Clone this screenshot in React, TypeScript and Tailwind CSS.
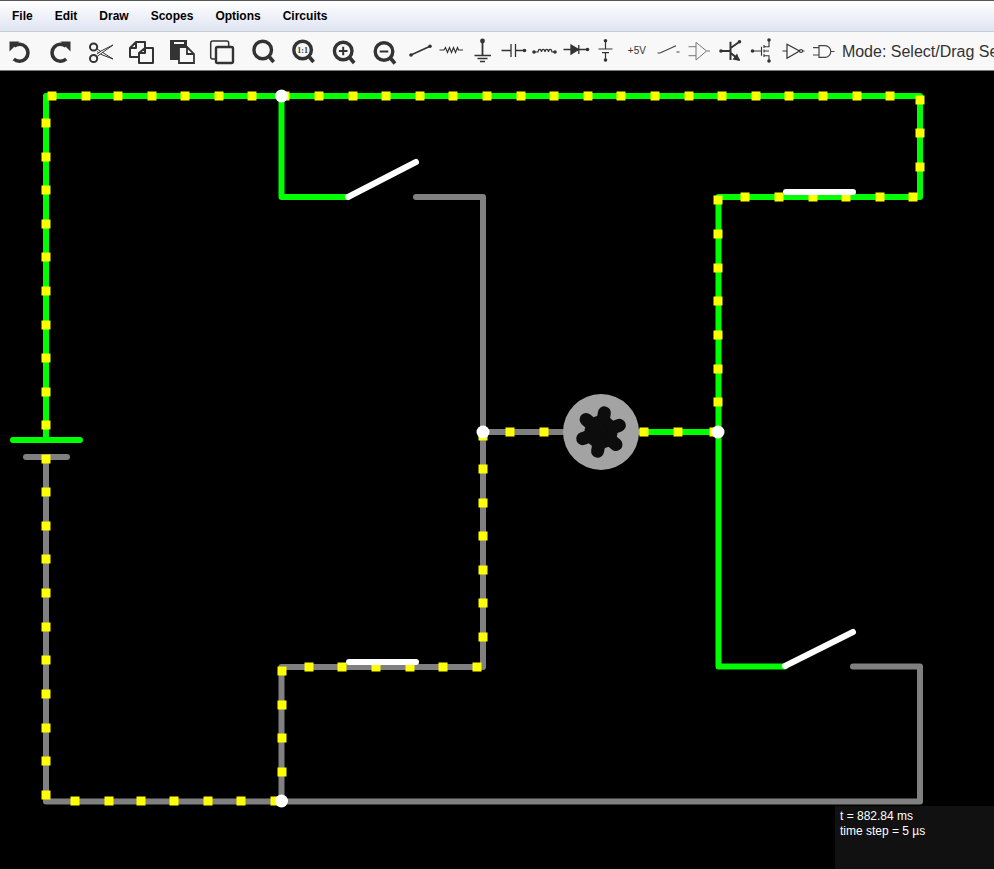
import React from "react";

const menus = ["File", "Edit", "Draw", "Scopes", "Options", "Circuits"];

// dots are in page coordinates, the canvas viewBox starts at y=71
const dots: [number, number][] = [
  ...[52, 86, 118, 152, 185, 219, 252, 285, 319, 353, 386, 420, 453, 487, 521, 554, 588, 621, 655, 689, 722, 756, 789, 823, 857, 890].map((x): [number, number] => [x, 96]),
  ...[100, 133, 167].map((y): [number, number] => [920, y]),
  ...[913, 880, 846, 813, 779, 745].map((x): [number, number] => [x, 197]),
  ...[200, 234, 268, 301, 335, 369, 402].map((y): [number, number] => [718, y]),
  ...[714, 678, 644].map((x): [number, number] => [x, 432]),
  ...[123, 157, 190, 224, 257, 291, 325, 358, 392, 425].map((y): [number, number] => [46, y]),
  ...[459, 492, 526, 559, 593, 627, 660, 694, 728, 761, 795].map((y): [number, number] => [46, y]),
  ...[75, 109, 141, 174, 208, 241, 275].map((x): [number, number] => [x, 801]),
  ...[671, 705, 738, 772].map((y): [number, number] => [282, y]),
  ...[309, 342, 376, 410, 443, 477].map((x): [number, number] => [x, 667]),
  ...[637, 603, 570, 536, 503, 469, 436].map((y): [number, number] => [483, y]),
  ...[510, 544].map((x): [number, number] => [x, 432]),
];

const lobes = [10, 70, 130, 190, 250, 310];

function Lens({ cx, cy, children }: { cx: number; cy: number; children?: React.ReactNode }) {
  return (
    <g stroke="#333" fill="none">
      <circle cx={cx} cy={cy} r="8.8" strokeWidth="3.4" />
      <line x1={cx + 6.8} y1={cy + 7} x2={cx + 11} y2={cy + 12} strokeWidth="3.6" />
      {children}
    </g>
  );
}

const bigIcons: React.ReactNode[] = [
  <g key="undo" fill="none" stroke="#333">
    <path d="M14 14.2 A8.5 8.5 0 1 1 13.8 27" strokeWidth="3.6" />
    <path d="M9.5 9.5 L19.5 9.5 L9.5 19.5 Z" fill="#333" stroke="none" />
  </g>,
  <g key="redo" fill="none" stroke="#333">
    <path d="M26 14.2 A8.5 8.5 0 1 0 26.2 27" strokeWidth="3.6" />
    <path d="M30.5 9.5 L20.5 9.5 L30.5 19.5 Z" fill="#333" stroke="none" />
  </g>,
  <g key="cut" fill="none" stroke="#333" strokeWidth="1.6">
    <circle cx="12.6" cy="15" r="3.6" strokeWidth="2" />
    <circle cx="12.6" cy="26.5" r="3.6" strokeWidth="2" />
    <path d="M16 17 L32 27 L21 22.8 L16 19.5" fill="#fff" strokeWidth="1" />
    <path d="M16 24.5 L32 13 L21 18.5 L16 22" fill="#fff" strokeWidth="1" />
  </g>,
  <g key="copy" fill="#f8f8f8" stroke="#333" strokeWidth="2">
    <path d="M15 10 H24 V25 H9 V16 Z M15 10 V16 H9" strokeLinejoin="round" />
    <path d="M24 16 H32 V31 H18 V21 Z M24 16 V21 H18" strokeLinejoin="round" />
  </g>,
  <g key="paste">
    <path d="M8 8 H25 V28 H8 Z" fill="#333" />
    <rect x="12" y="10" width="10" height="2" fill="#f8f8f8" />
    <path d="M17 15 H25 L32 22 V31 H17 Z M25 15 V22 H32" fill="#f8f8f8" stroke="#333" strokeWidth="1.8" />
  </g>,
  <g key="dup" fill="none" stroke="#333">
    <rect x="8.7" y="9" width="18" height="18" rx="2" strokeWidth="1.5" />
    <rect x="14" y="15" width="17" height="16" rx="1.5" fill="#f8f8f8" strokeWidth="2.4" />
  </g>,
  <Lens key="search" cx={19.7} cy={18} />,
  <Lens key="one" cx={19.6} cy={18}>
    <text x={19.6} y={21} textAnchor="middle" fontSize="8" fontWeight="700" fontFamily="'Liberation Serif', serif" fill="#333" stroke="none">1:1</text>
  </Lens>,
  <Lens key="in" cx={19.2} cy={19}>
    <path d="M14.9 19 H23.5 M19.2 14.7 V23.3" strokeWidth="2" />
  </Lens>,
  <Lens key="out" cx={20} cy={19.5}>
    <path d="M15.7 19.5 H24.3" strokeWidth="2" />
  </Lens>,
];

const Dot = ({ x, y }: { x: number; y: number }) => <circle cx={x} cy={y} r="1.8" fill="#333" stroke="none" />;

const partIcons: React.ReactNode[] = [
  <g key="wire" stroke="#333" strokeWidth="1.6">
    <line x1="7" y1="23" x2="26" y2="14.3" />
    <Dot x={7} y={23} />
    <Dot x={26} y={14.3} />
  </g>,
  <path key="res" d="M4.5 18 H9 L10.5 15.5 L12.5 20.5 L14.5 15.5 L16.5 20.5 L18.5 15.5 L20.5 20.5 L22.5 15.5 L23.5 18 H28" fill="none" stroke="#333" strokeWidth="1.2" />,
  <g key="gnd" stroke="#333">
    <path d="M16.5 9 V23" strokeWidth="1.8" />
    <path d="M8.5 23.5 H25 M11.5 26.5 H21.5 M14 29.5 H19" strokeWidth="1.7" />
    <circle cx="16.5" cy="9" r="2.4" fill="#333" stroke="none" />
  </g>,
  <g key="cap" stroke="#333" strokeWidth="1.3">
    <path d="M4.5 18.5 H14 M14 12 V25 M18.5 12 V25 M18.5 18.5 H27.5" fill="none" />
    <Dot x={27.5} y={18.5} />
  </g>,
  <g key="ind" stroke="#333" fill="none" strokeWidth="1.2">
    <path d="M6 20 H10 C10.5 16.5 13 16.5 13.5 20 C14 16.5 16.5 16.5 17 20 C17.5 16.5 20 16.5 20.5 20 C21 16.5 23.5 16.5 24 20 H27" />
    <Dot x={6} y={20} />
    <Dot x={27} y={20} />
  </g>,
  <g key="diode" stroke="#333" strokeWidth="1.3">
    <path d="M4.5 17.5 H28.5 M19.8 13 V22" fill="none" />
    <path d="M12 13 L19.5 17.5 L12 22 Z" fill="#333" />
    <Dot x={28.5} y={17.5} />
  </g>,
  <g key="bat" stroke="#333" strokeWidth="1.2">
    <path d="M15.5 8.7 V17 M8.5 17 H22.5 M12 20.7 H19 M15.5 20.7 V28" fill="none" />
    <Dot x={15.5} y={8.7} />
    <Dot x={15.5} y={28} />
  </g>,
  <span key="rail" className="text-[10px] leading-none text-[#333]">+5V</span>,
  <path key="sw" d="M5.5 21 H8 L24 13.7 M24.5 20 H27.5" fill="none" stroke="#444" strokeWidth="1.2" />,
  <g key="opamp" stroke="#777" fill="none" strokeWidth="1">
    <path d="M13 10.3 V28 L23.5 19 Z M5.5 14.7 H13 M5.5 23.7 H13 M23.5 19 H27" />
  </g>,
  <g key="npn" stroke="#333" strokeWidth="2">
    <path d="M7 19 H16.5 M16.5 9.7 V28 M17 15.7 L25.5 9.7 M17 21.3 L25.5 28" fill="none" />
    <Dot x={7} y={19} />
    <Dot x={25.5} y={9.7} />
    <path d="M26 29 L18.5 27.5 L23 21.5 Z" fill="#333" stroke="none" />
  </g>,
  <g key="fet" stroke="#333" fill="none" strokeWidth="1.1">
    <path d="M7.5 19 H16.5 M16.5 14.7 V23.7 M19 13 V16 M19 17.5 V20.5 M19 22 V25 M19 14.7 H24 V8 M19 23.7 H24 V29 M19 19 H24" />
    <Dot x={24} y={8} />
    <Dot x={24} y={29} />
    <Dot x={7.5} y={19} />
  </g>,
  <g key="inv" stroke="#333" fill="none" strokeWidth="1.2">
    <path d="M6.5 19 H11 M11 12.3 V26.3 L23.5 19 Z M26.5 19 H28.5" />
    <circle cx="25" cy="19" r="1.5" />
  </g>,
  <g key="and" stroke="#444" fill="none" strokeWidth="1.2">
    <path d="M6 15.7 H12 M6 23 H12 M12 13.7 H18 A5.8 5.8 0 0 1 18 25.3 H12 Z M23.8 19.5 H27.5" />
  </g>,
];

function Canvas() {
  return (
    <div className="relative flex-1 bg-black overflow-hidden">
      <svg width="994" height="798" viewBox="0 71 994 798" className="block">
        <g fill="none" strokeWidth="6" strokeLinejoin="round" strokeLinecap="round">
          <g stroke="#808080">
            <path d="M46 457 V801.5 H920 V666.5 H853" />
            <path d="M281.5 801.5 V667 H483 V197 H416" />
            <path d="M483 432 H565" />
            <path d="M26 457 H67" />
          </g>
          <g stroke="#00ff00">
            <path d="M46 440 V96 H920 V197 H718.5 V666.5 H785" />
            <path d="M281.5 96 V197 H348" />
            <path d="M718 432 H636" />
            <path d="M13 440 H80" />
          </g>
        </g>
        {dots.map(([x, y], i) => (
          <rect key={i} x={x - 4.5} y={y - 4.5} width="9" height="9" fill="#ffff00" />
        ))}
        <g stroke="#fff" strokeWidth="6" strokeLinecap="round">
          <line x1="348" y1="197" x2="416" y2="162" />
          <line x1="349" y1="662" x2="416" y2="662" />
          <line x1="786" y1="192" x2="853" y2="192" />
          <line x1="785" y1="666" x2="853" y2="632" />
        </g>
        {[[281.5, 96], [483, 432], [718, 432], [281.5, 801]].map(([x, y]) => (
          <circle key={x + "-" + y} cx={x} cy={y} r="6.5" fill="#fff" />
        ))}
        <circle cx="601" cy="432" r="38" fill="#a3a3a3" />
        <circle cx="601" cy="432" r="16.5" fill="#0d0d0d" />
        {lobes.map((a) => (
          <line
            key={a}
            x1="601"
            y1="432"
            x2="601"
            y2="412.5"
            transform={`rotate(${a} 601 432)`}
            stroke="#0d0d0d"
            strokeWidth="13"
            strokeLinecap="round"
          />
        ))}
      </svg>
      <div className="absolute right-0 bottom-0 w-[159px] h-[63px] bg-[#111] pl-[5px] pt-[3px] text-[12px] leading-[15px] text-white font-['Liberation_Sans',sans-serif]">
        <div>t = 882.84 ms</div>
        <div>time step = 5 µs</div>
      </div>
    </div>
  );
}

export default function App() {
  return (
    <div className="h-[869px] w-[994px] flex flex-col overflow-hidden font-['Liberation_Sans',Arial,sans-serif]">
      <div className="h-[32px] flex items-center pl-[1px] pb-[1px] border-t border-t-[#555] border-b border-b-[#ccc] bg-gradient-to-b from-[#ffffff] to-[#dfe4f2]">
        {menus.map((m) => (
          <div key={m} className="px-[11px] text-[12px] font-bold text-black">
            {m}
          </div>
        ))}
      </div>
      <div className="h-[39px] flex items-center bg-[#f8f8f8] border-b border-b-[#777] overflow-hidden">
        {bigIcons.map((icon, i) => (
          <div key={i} className="w-[40.45px] h-[38px] shrink-0">
            <svg width="40.45" height="38" viewBox="0 0 40.45 38" className="block overflow-visible">
              {icon}
            </svg>
          </div>
        ))}
        {partIcons.map((icon, i) =>
          i === 7 ? (
            <div key={i} className="w-[31px] h-[38px] shrink-0 flex items-center justify-center">
              {icon}
            </div>
          ) : (
            <div key={i} className="w-[31px] h-[38px] shrink-0">
              <svg width="31" height="38" viewBox="0 0 31 38" className="block">
                {icon}
              </svg>
            </div>
          )
        )}
        <span className="ml-[3.5px] pt-[1px] text-[16px] whitespace-nowrap text-[#333]">Mode: Select/Drag Sel</span>
      </div>
      <Canvas />
    </div>
  );
}
